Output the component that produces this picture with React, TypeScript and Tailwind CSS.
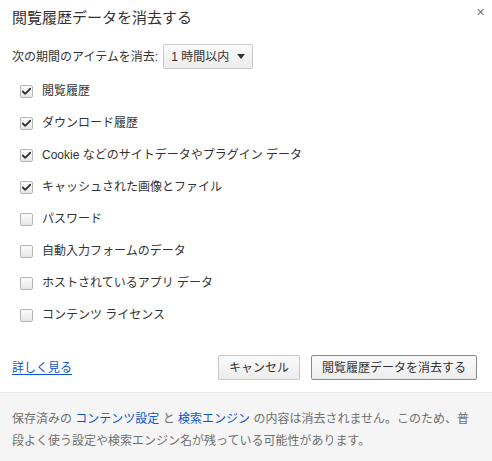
import { Check } from "lucide-react";

const items = [
  { label: "閲覧履歴", checked: true },
  { label: "ダウンロード履歴", checked: true },
  { label: "Cookie などのサイトデータやプラグイン データ", checked: true },
  { label: "キャッシュされた画像とファイル", checked: true },
  { label: "パスワード", checked: false },
  { label: "自動入力フォームのデータ", checked: false },
  { label: "ホストされているアプリ データ", checked: false },
  { label: "コンテンツ ライセンス", checked: false },
];

function Box({ checked }: { checked: boolean }) {
  return (
    <span className="flex h-[13px] w-[13px] items-center justify-center rounded-[2px] border border-[#b5b5b5] bg-gradient-to-b from-[#fdfdfd] to-[#e6e6e6]">
      {checked && <Check className="h-[11px] w-[11px] text-[#333]" strokeWidth={4} />}
    </span>
  );
}

export default function App() {
  return (
    <div
      className="relative flex h-[461px] w-[492px] flex-col bg-white text-[12px] text-[#333]"
      style={{ fontFamily: '"Liberation Sans", "Noto Sans CJK JP", sans-serif' }}
    >
      <button className="absolute right-[7px] top-[7px] text-[11px] leading-none text-[#777]">✕</button>

      <div className="px-3 pt-[8px]">
        <h1 className="text-[15px] leading-[20px] text-[#333]">閲覧履歴データを消去する</h1>

        <div className="mt-[16px] flex items-center gap-[5px]">
          <span>次の期間のアイテムを消去:</span>
          <div className="flex h-[25px] w-[90px] items-center justify-between rounded-[2px] border border-[#c8c8c8] bg-gradient-to-b from-[#fafafa] to-[#ededed] pl-[7px] pr-[7px]">
            <span>1 時間以内</span>
            <svg width="8" height="5" viewBox="0 0 8 5">
              <path d="M0 0h8L4 5z" fill="#333" />
            </svg>
          </div>
        </div>

        <ul className="mt-[6px] flex flex-col pl-[8px]">
          {items.map((it) => (
            <li key={it.label} className="flex h-[32px] items-center gap-[9px]">
              <Box checked={it.checked} />
              <span>{it.label}</span>
            </li>
          ))}
        </ul>

        <div className="mt-[24px] flex items-center">
          <a className="text-[#1155cc] underline underline-offset-2">詳しく見る</a>
          <div className="ml-auto flex gap-[11px] pr-[3px]">
            <button className="h-[25px] w-[82px] rounded-[2px] border border-[#c8c8c8] bg-gradient-to-b from-[#fafafa] to-[#ededed] text-[#333]">
              キャンセル
            </button>
            <button className="h-[25px] w-[166px] rounded-[2px] border border-[#8a8a8a] bg-gradient-to-b from-[#fafafa] to-[#ededed] text-[#333]">
              閲覧履歴データを消去する
            </button>
          </div>
        </div>
      </div>

      <div className="mt-auto h-[69px] border-t border-[#e8e8e8] bg-[#f5f5f5] px-3 pt-[15px] leading-[22px] text-[#707070]">
        <p>
          保存済みの <span className="text-[#1155cc]">コンテンツ設定</span> と{" "}
          <span className="text-[#1155cc]">検索エンジン</span> の内容は消去されません。このため、普段よく使う設定や検索エンジン名が残っている可能性があります。
        </p>
      </div>
    </div>
  );
}
